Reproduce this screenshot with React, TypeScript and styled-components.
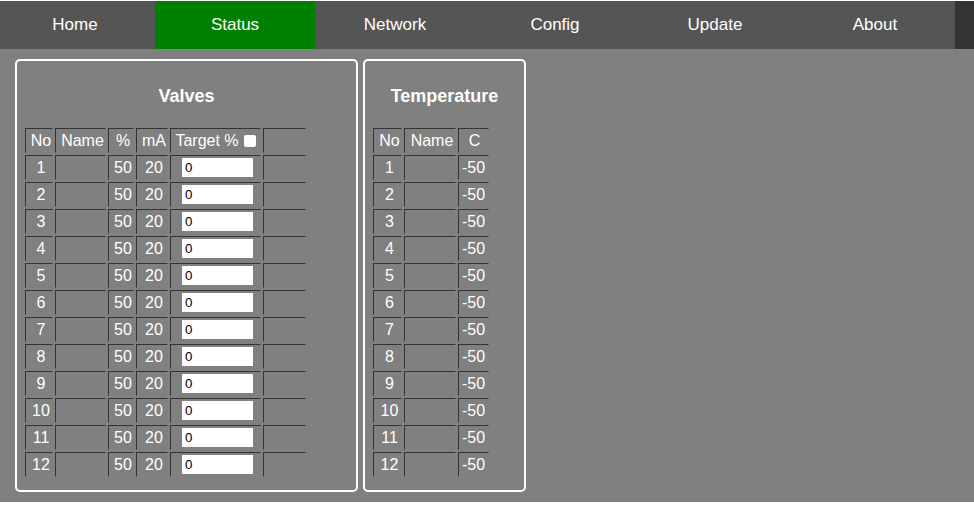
import React from "react";
import styled, { createGlobalStyle } from "styled-components";

const Global = createGlobalStyle`
  html, body { margin: 0; padding: 0; background: #ffffff; }
  body { font-family: "Liberation Sans", Arial, sans-serif; }
`;

const Page = styled.div`
  padding-top: 1px;
`;

const Nav = styled.nav`
  display: flex;
  height: 48px;
  background: #333333;
  overflow: hidden;
`;

const NavList = styled.div`
  display: flex;
  margin-left: -5px;
`;

const NavItem = styled.div<{ $active?: boolean }>`
  width: 160px;
  height: 48px;
  line-height: 48px;
  text-align: center;
  font-size: 17px;
  color: #ffffff;
  background: ${(p) => (p.$active ? "#008000" : "#555555")};
`;

const Main = styled.main`
  display: flex;
  align-items: flex-start;
  gap: 5px;
  background: #808080;
  padding: 10px 15px;
`;

const Panel = styled.section<{ $w: number }>`
  box-sizing: border-box;
  width: ${(p) => p.$w}px;
  border: 2px solid #ffffff;
  border-radius: 5px;
  padding: 0 8px 11px 8px;
`;

const Title = styled.h3`
  margin: 0;
  padding: 25px 0 19px;
  line-height: 21px;
  font-size: 18px;
  font-weight: bold;
  color: #ffffff;
  text-align: center;
`;

const Table = styled.table`
  border-collapse: separate;
  border-spacing: 2px;
  margin: 0 0 0 -2px;
  color: #ffffff;
  font-size: 16px;
`;

const Cell = styled.td<{ $w: number; $pad?: number }>`
  box-sizing: border-box;
  width: ${(p) => p.$w}px;
  min-width: ${(p) => p.$w}px;
  height: 25px;
  padding: 0 0 0 ${(p) => (p.$pad ?? 4)}px;
  border-style: solid;
  border-width: 1px;
  border-color: #333333 #808080 #808080 #333333;
  text-align: center;
  vertical-align: middle;
  white-space: nowrap;
  font-weight: normal;
`;

const HeadCell = styled(Cell).attrs({ as: "th" })``;

const ValueInput = styled.input`
  box-sizing: border-box;
  width: 71px;
  height: 19px;
  border: none;
  outline: none;
  padding: 1px 3px;
  margin: 0;
  background: #ffffff;
  color: #000000;
  font-family: "Liberation Sans", Arial, sans-serif;
  font-size: 13.33px;
  vertical-align: middle;
`;

const Check = styled.input`
  appearance: none;
  -webkit-appearance: none;
  width: 12px;
  height: 12px;
  margin: 0 0 0 5px;
  border-radius: 2px;
  background: #ffffff;
  border: none;
  vertical-align: -1px;
`;

const valveCols = [28, 51, 26, 32, 91, 43];
const tempCols = [29, 52, 31];
const rows = Array.from({ length: 12 }, (_, i) => i + 1);

export default function App() {
  const tabs = ["Home", "Status", "Network", "Config", "Update", "About"];
  return (
    <Page>
      <Global />
      <Nav>
        <NavList>
          {tabs.map((t) => (
            <NavItem key={t} $active={t === "Status"}>
              {t}
            </NavItem>
          ))}
        </NavList>
      </Nav>
      <Main>
        <Panel $w={343}>
          <Title>Valves</Title>
          <Table>
            <thead>
              <tr>
                <HeadCell $w={valveCols[0]}>No</HeadCell>
                <HeadCell $w={valveCols[1]}>Name</HeadCell>
                <HeadCell $w={valveCols[2]}>%</HeadCell>
                <HeadCell $w={valveCols[3]}>mA</HeadCell>
                <HeadCell $w={valveCols[4]} $pad={0}>
                  Target %<Check type="checkbox" readOnly />
                </HeadCell>
                <HeadCell $w={valveCols[5]}></HeadCell>
              </tr>
            </thead>
            <tbody>
              {rows.map((r) => (
                <tr key={r}>
                  <Cell $w={valveCols[0]}>{r}</Cell>
                  <Cell $w={valveCols[1]}></Cell>
                  <Cell $w={valveCols[2]}>50</Cell>
                  <Cell $w={valveCols[3]}>20</Cell>
                  <Cell $w={valveCols[4]}>
                    <ValueInput type="text" defaultValue="0" />
                  </Cell>
                  <Cell $w={valveCols[5]}></Cell>
                </tr>
              ))}
            </tbody>
          </Table>
        </Panel>
        <Panel $w={163}>
          <Title>Temperature</Title>
          <Table>
            <thead>
              <tr>
                <HeadCell $w={tempCols[0]}>No</HeadCell>
                <HeadCell $w={tempCols[1]}>Name</HeadCell>
                <HeadCell $w={tempCols[2]} $pad={2}>C</HeadCell>
              </tr>
            </thead>
            <tbody>
              {rows.map((r) => (
                <tr key={r}>
                  <Cell $w={tempCols[0]}>{r}</Cell>
                  <Cell $w={tempCols[1]}></Cell>
                  <Cell $w={tempCols[2]} $pad={0}>-50</Cell>
                </tr>
              ))}
            </tbody>
          </Table>
        </Panel>
      </Main>
    </Page>
  );
}
